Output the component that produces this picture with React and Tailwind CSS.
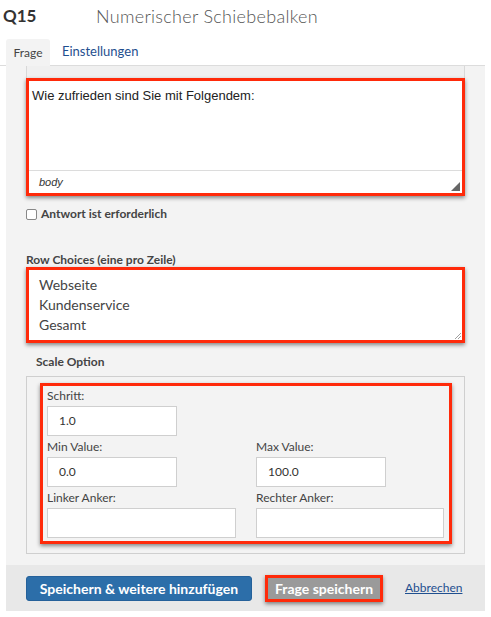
import React from "react";

const font = { fontFamily: "Lato, 'Open Sans', sans-serif" };

function RedBox({ className = "", children }) {
  return (
    <div className={`border-[3px] border-[#ff2a0a] shadow-[0_2px_4px_rgba(0,0,0,0.45)] ${className}`}>
      {children}
    </div>
  );
}

function Field({ label, value, w }) {
  return (
    <div className="flex flex-col">
      <div className="text-[12px] text-[#444] leading-[14px] mb-[3px]">{label}</div>
      <div className={`${w} h-[30px] bg-white border border-[#cfcfcf] flex items-center pl-[11px] text-[12px] text-[#333]`}>
        {value}
      </div>
    </div>
  );
}

export default function App() {
  return (
    <div className="w-[491px] h-[617px] bg-white relative overflow-hidden" style={font}>
      {/* Header */}
      <div className="h-[31px] flex items-center">
        <div className="pl-[3px] w-[96px] text-[17px] font-bold text-[#333] leading-none">Q15</div>
        <div className="text-[18px] text-[#555] font-light leading-none tracking-[0.3px]">Numerischer Schiebebalken</div>
      </div>
      {/* Tabs */}
      <div className="mt-[9px] h-[26px] flex items-end pl-[6px] border-b border-[#dcdcdc] w-[485px]">
        <div className="h-[27px] w-[44px] bg-[#f3f3f3] rounded-t-[3px] flex items-center justify-center text-[12px] text-[#444] -mb-px">Frage</div>
        <div className="h-[26px] ml-[12px] flex items-center text-[13px] text-[#1f4f8f]">Einstellungen</div>
      </div>
      {/* Panel */}
      <div className="ml-[6px] w-[479px] bg-[#f3f3f3]">
        <div className="px-[20px] pb-[11px]">
          <div className="h-[12px] border-x border-[#d8d8d8] bg-[#f0f0f0]" />
          <RedBox className="h-[118px] bg-white flex flex-col">
            <div className="flex-1 px-[3px] pt-[5px] text-[13px] text-[#222]" style={{ fontFamily: "'Liberation Sans', Arial, sans-serif" }}>
              Wie zufrieden sind Sie mit Folgendem:
            </div>
            <div className="h-[23px] border-t border-[#dcdcdc] relative flex items-center pl-[10px] text-[11px] italic text-[#333]" style={{ fontFamily: "'Liberation Sans', Arial, sans-serif" }}>
              body
              <svg className="absolute right-[2px] bottom-[2px]" width="9" height="9" viewBox="0 0 9 9">
                <polygon points="9,0 9,9 0,9" fill="#666" />
              </svg>
            </div>
          </RedBox>
          <div className="mt-[9px] flex items-center gap-[4px]">
            <div className="w-[11px] h-[11px] bg-white border border-[#888] rounded-[2px]" />
            <span className="text-[12px] font-bold text-[#444]">Antwort ist erforderlich</span>
          </div>
          <div className="mt-[30px] text-[12px] font-bold text-[#444] leading-[14px]">Row Choices (eine pro Zeile)</div>
          <RedBox className="mt-0 h-[76px] bg-white relative pl-[10px] pt-[5px] text-[14px] text-[#444] leading-[20px]">
            <div>Webseite</div>
            <div>Kundenservice</div>
            <div>Gesamt</div>
            <svg className="absolute right-[1px] bottom-[1px]" width="7" height="7" viewBox="0 0 7 7">
              <line x1="7" y1="1" x2="1" y2="7" stroke="#888" strokeWidth="0.8" />
              <line x1="7" y1="4" x2="4" y2="7" stroke="#888" strokeWidth="0.8" />
            </svg>
          </RedBox>
          <div className="mt-[12px] pl-[10px] text-[12px] font-bold text-[#444] leading-[14px]">Scale Option</div>
          <div className="mt-[7px] h-[178px] border border-[#cfcfcf] px-[13px] pt-[6px]">
            <RedBox className="w-[412px] h-[161px] px-[4px] pt-[3px] flex flex-col gap-[4px]">
              <Field label="Schritt:" value="1.0" w="w-[130px]" />
              <div className="flex gap-[79px]">
                <Field label="Min Value:" value="0.0" w="w-[130px]" />
                <Field label="Max Value:" value="100.0" w="w-[130px]" />
              </div>
              <div className="flex gap-[20px]">
                <Field label="Linker Anker:" value="" w="w-[189px]" />
                <Field label="Rechter Anker:" value="" w="w-[188px]" />
              </div>
            </RedBox>
          </div>
        </div>
        {/* Footer */}
        <div className="h-[46px] bg-[#e8e8e8] flex items-center px-[20px]">
          <div className="h-[25px] w-[226px] bg-[#2c6ea9] border border-[#25619a] rounded-[3px] flex items-center justify-center text-white text-[14px] font-bold">
            Speichern &amp; weitere hinzufügen
          </div>
          <div className="ml-[13px] border-[3px] border-[#ff2a0a] shadow-[0_2px_4px_rgba(0,0,0,0.45)]">
            <div className="h-[21px] w-[112px] bg-[#9a9a9a] flex items-center justify-center text-white text-[14px] font-bold">
              Frage speichern
            </div>
          </div>
          <div className="ml-[22px] text-[12px] text-[#1f4f8f] underline">Abbrechen</div>
        </div>
      </div>
    </div>
  );
}
